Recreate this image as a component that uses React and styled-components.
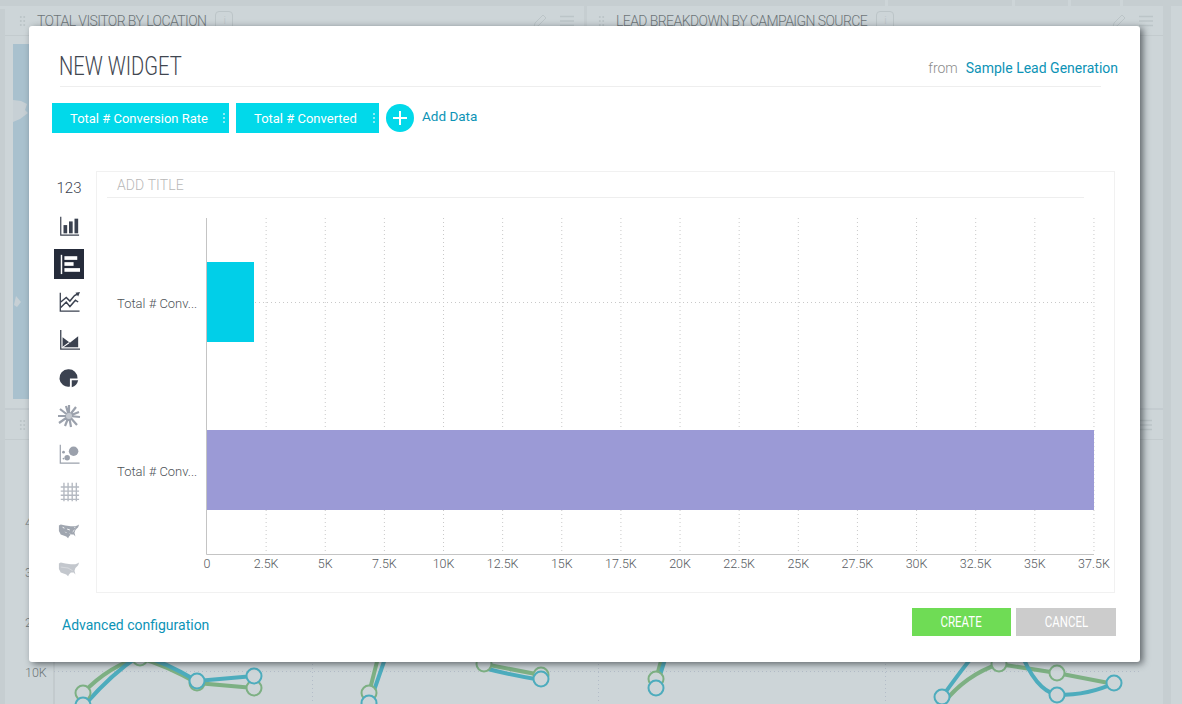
import React from "react";
import styled, { createGlobalStyle } from "styled-components";

const Global = createGlobalStyle`
  html, body { margin: 0; padding: 0; background: #cdd5d8; }
  * { box-sizing: border-box; }
`;

const Page = styled.div`
  position: relative;
  width: 1182px;
  height: 704px;
  overflow: hidden;
  background: #cdd5d8;
  font-family: Roboto, "Liberation Sans", sans-serif;
`;

/* ---------- dimmed dashboard behind the dialog ---------- */
const TopStrip = styled.div`
  height: 6px;
  display: flex;
  justify-content: flex-end;
  background: #c6ced1;
`;
const StripGap = styled.span`
  width: ${p => p.$w}px;
  border-left: 3px solid #cdd5d8;
`;
const Shell = styled.div`
  display: flex;
  height: 698px;
`;
const Gutter = styled.div`
  width: 5px;
  margin-top: 3px;
  background: #c6ced1;
`;
const Main = styled.div`
  width: 1158px;
`;
const Rail = styled.div`
  width: 8px;
  background: #c6ced1;
`;
const Dash = styled.div`
  display: grid;
  grid-template-columns: 579px 579px;
  height: 402px;
`;
const DashPanel = styled.div`
  border-left: ${p => (p.$rule ? "3px solid #c6ced1" : "none")};
  background: #cdd5d8;
`;
const DashHead = styled.div`
  height: 30px;
  display: flex;
  align-items: center;
  gap: 9px;
  border-bottom: 1px solid #c3cbce;
  color: #6e7578;
  font-size: 14px;
  font-weight: 300;
  letter-spacing: -0.58px;
  padding-right: 10px;
`;
const Grip = styled.span`
  width: 7px;
  height: 12px;
  margin: 0 2px 0 ${p => p.$left}px;
  background: radial-gradient(circle, #bcc5c8 1px, transparent 1.3px) 0 0 / 3.5px 4px;
`;
const Info = styled.span`
  width: 18px;
  height: 19px;
  border: 1px solid #bcc5c8;
  border-radius: 4px;
  color: #b9c2c5;
  font-size: 11px;
  text-align: center;
  line-height: 17px;
`;
const HeadTools = styled.span`
  margin-left: auto;
  display: flex;
  align-items: center;
  gap: 12px;
  color: #bcc5c8;
`;
const MapArea = styled.div`
  margin: 8px 0 0 8px;
  height: 355px;
  background: #a9c1ce;
`;
const MapArt = styled.svg`
  display: block;
  width: 40px;
  height: 355px;
`;
const LowerBand = styled.div`
  height: 32px;
  display: flex;
  align-items: center;
  background: #cdd5d8;
  border-top: 2px solid #c4ccd0;
  border-bottom: 1px solid #c3cbce;
  padding-right: 11px;
`;
const LowerChart = styled.svg`
  display: block;
  width: 1158px;
  height: 264px;
`;

/* ---------- dialog ---------- */
const Modal = styled.div`
  position: absolute;
  left: 29px;
  top: 26px;
  width: 1111px;
  height: 636px;
  background: #fff;
  border-radius: 3px;
  box-shadow: 3px 2px 7px rgba(35, 42, 46, 0.65);
`;
const Header = styled.div`
  margin: 0 22px 0 30px;
  height: 60px;
  display: flex;
  align-items: flex-end;
  justify-content: space-between;
  padding-bottom: 5px;
`;
const HeaderRule = styled.div`
  margin: 0 39px 0 31px;
  height: 1px;
  background: #eeeeee;
`;
const Title = styled.h1`
  margin: 0;
  font-size: 25px;
  line-height: 28px;
  font-weight: 300;
  color: #3f4650;
  transform: scaleX(0.805);
  transform-origin: left center;
`;
const Source = styled.div`
  display: flex;
  align-items: baseline;
  gap: 8px;
  font-size: 14px;
  font-weight: 300;
  line-height: 18px;
  padding-bottom: 4px;
`;
const From = styled.span`
  color: #8c8c8c;
`;
const TealLink = styled.a`
  color: #0c93b6;
  font-weight: 400;
  font-size: ${p => p.$size || 14}px;
`;
const AdvancedLink = styled(TealLink)`
  margin-top: 6px;
`;
const ChipRow = styled.div`
  display: flex;
  align-items: center;
  gap: 7px;
  margin: 16px 0 0 23px;
  height: 30px;
`;
const Chip = styled.div`
  height: 30px;
  width: ${p => p.$w}px;
  display: flex;
  align-items: center;
  justify-content: space-between;
  padding: 0 3px 0 18px;
  background: #01d9ea;
  color: #fff;
  font-size: 13px;
  font-weight: 400;
`;
const Dots = styled.span`
  width: 4px;
  height: 12px;
  background: radial-gradient(circle, rgba(255, 255, 255, 0.55) 0.7px, transparent 1px) 0 0 / 4px 4px;
`;
const AddRound = styled.div`
  width: 28px;
  height: 28px;
  border-radius: 50%;
  background: #01d9ea;
  display: flex;
  align-items: center;
  justify-content: center;
`;
const AddLabel = styled(TealLink)`
  margin: -4px 0 0 1px;
`;
const Body = styled.div`
  display: flex;
  margin-top: 38px;
`;
const IconRail = styled.div`
  width: 67px;
  padding: 2px 0 0 13px;
  display: flex;
  flex-direction: column;
  align-items: center;
  gap: 8px;
`;
const IconSlot = styled.div`
  width: 30px;
  height: 30px;
  display: flex;
  align-items: center;
  justify-content: center;
  color: ${p => (p.$active ? "#fff" : p.$muted ? "#9ba1ac" : "#3b4250")};
  background: ${p => (p.$active ? "#252b3a" : "transparent")};
  font-size: 15px;
  font-weight: 300;
`;
const ChartPanel = styled.div`
  width: 1019px;
  height: 422px;
  border: 1px solid #f1f1f1;
  padding: 0 0 0 10px;
`;
const AddTitle = styled.div`
  width: 977px;
  height: 26px;
  padding: 4px 0 0 10px;
  border-bottom: 1px solid #eeeeee;
  color: #b8b8b8;
  font-size: 14px;
  font-weight: 300;
  line-height: 18px;
  letter-spacing: 0.1px;
`;
const ChartSvg = styled.svg`
  display: block;
  margin-left: -10px;
  width: 1017px;
  height: 395px;
`;
const Footer = styled.div`
  display: flex;
  align-items: center;
  justify-content: space-between;
  margin: 15px 24px 0 33px;
  height: 28px;
`;
const Buttons = styled.div`
  display: flex;
  gap: 5px;
`;
const Btn = styled.button`
  width: ${p => p.$w}px;
  height: 28px;
  border: 0;
  padding: 0;
  background: ${p => p.$bg};
  color: #fff;
  font-family: inherit;
  font-size: 14px;
  font-weight: 400;
`;
const BtnText = styled.span`
  display: inline-block;
  transform: scaleX(0.82);
`;

const Tick = styled.text`
  font-family: Roboto, "Liberation Sans", sans-serif;
  font-size: 12.5px;
  font-weight: 300;
  fill: #555a60;
`;
const Category = styled(Tick)`
  font-size: 13px;
  fill: #4e5358;
`;

/* ---------- icons ---------- */
const Ico = ({ children, w = 22, h = 22 }) => (
  <svg width={w} height={h} viewBox="0 0 24 24" fill="currentColor">{children}</svg>
);
const Axis = () => <path d="M3 2v20h20" fill="none" stroke="currentColor" strokeWidth="1.3" />;
const IcoBars = () => (
  <Ico><Axis /><rect x="6" y="11" width="4" height="9" /><rect x="12" y="7" width="4" height="13" /><rect x="18" y="4" width="4" height="16" /></Ico>
);
const IcoHBars = () => (
  <Ico>
    <rect x="3" y="2" width="1.6" height="21" />
    <rect x="7" y="3.5" width="14" height="4" /><rect x="7" y="10" width="10" height="4" /><rect x="7" y="16.5" width="17" height="4" />
  </Ico>
);
const IcoLines = () => (
  <Ico>
    <path d="M2.5 2v20h21" fill="none" stroke="currentColor" strokeWidth="1.4" />
    <path d="M3 12l6-5 4 4 5-6 4-2M3 18l6-6 4 5 6-7 3 2" fill="none" stroke="currentColor" strokeWidth="1.6" />
    <path d="M24 1l-5 1 3 4z" />
  </Ico>
);
const IcoArea = () => (
  <Ico>
    <path d="M3 1v21h21" fill="none" stroke="currentColor" strokeWidth="1.4" />
    <path d="M5 9l8 6 9-7v12H5z" /><path d="M5 20l7-5" stroke="#fff" strokeWidth="1.1" />
  </Ico>
);
const IcoPie = () => (
  <Ico>
    <path d="M11 2.5a9.5 9.5 0 1 0 2 18.8V12.5h8.3A9.5 9.5 0 0 0 11 2.5z" />
    <path d="M15 14.5h7a10 10 0 0 1-7 7.5z" />
  </Ico>
);
const IcoBurst = () => (
  <Ico w={24} h={24}>
    <g stroke="currentColor" strokeWidth="2.2">
      <path d="M12 12V1M12 12l-3-10M12 12l7-9M12 12l10-4M12 12l11 1M12 12l8 9M12 12l2 11M12 12l-4 10M12 12l-10 7M12 12H1M12 12L3 5" />
    </g>
    <circle cx="12" cy="12" r="3" fill="#c4c8cf" />
  </Ico>
);
const IcoBubble = () => (
  <Ico>
    <path d="M2.5 2v20h21" fill="none" stroke="currentColor" strokeWidth="1.3" />
    <circle cx="17" cy="9" r="5.2" /><circle cx="10" cy="16" r="3" /><circle cx="6" cy="10" r="1.5" /><circle cx="6" cy="17" r="1" />
  </Ico>
);
const IcoGrid = () => (
  <Ico>
    <path d="M6.500 2v20M11 2v20M15.500 2v20M20 2v20M3 6.500h20M3 11h20M3 15.500h20M3 20h20" stroke="currentColor" strokeWidth="1.500" fill="none" opacity=".75" />
  </Ico>
);
const USA = "M1 7l2-1 5 1 6 1 5 0 2-1 2-1-1 3-3 3-1 3 1 4-2-2-3 0-2 2-1 2-2-2-3-1-3-1-2-4z";
const IcoMap = ({ speck }) => (
  <Ico>
    <path d={USA} opacity={speck ? 0.95 : 0.6} />
    {speck
      ? <path d="M5 9l2 1M10 11l3 1M16 14l2-2M8 14l1 1M13 16l1 1M18 9l1 1" stroke="#fff" strokeWidth="1" />
      : <path d="M3 11l8 1 5 3" stroke="#fff" strokeWidth=".6" fill="none" opacity=".6" />}
  </Ico>
);
const Pencil = () => (
  <svg width="16" height="16" viewBox="0 0 16 16" fill="none" stroke="currentColor"><path d="M2 14l1-4 8-8 3 3-8 8z" /></svg>
);
const Burger = () => (
  <svg width="14" height="12" viewBox="0 0 14 12" fill="none" stroke="currentColor" strokeWidth="1.500"><path d="M0 1.500h14M0 6h14M0 10.500h14" /></svg>
);

const rail = [
  { text: "123" },
  { icon: <IcoBars /> },
  { icon: <IcoHBars />, active: true },
  { icon: <IcoLines /> },
  { icon: <IcoArea /> },
  { icon: <IcoPie /> },
  { icon: <IcoBurst />, muted: true },
  { icon: <IcoBubble />, muted: true },
  { icon: <IcoGrid />, muted: true },
  { icon: <IcoMap speck />, muted: true },
  { icon: <IcoMap />, muted: true },
];

const ticks = ["0", "2.5K", "5K", "7.5K", "10K", "12.5K", "15K", "17.5K", "20K", "22.5K", "25K", "27.5K", "30K", "32.5K", "35K", "37.5K"];

const X0 = 110;
const STEP = 59.13;

const BarChart = () => (
  <ChartSvg viewBox="0 0 1017 395">
    {ticks.slice(1).map((_, i) => (
      <line key={i} x1={X0 + STEP * (i + 1)} x2={X0 + STEP * (i + 1)} y1="20" y2="355" stroke="#c9c9c9" strokeDasharray="1 3" />
    ))}
    <line x1={X0} x2="997" y1="104.500" y2="104.500" stroke="#c9c9c9" strokeDasharray="1 3" />
    <rect x={X0} y="64" width="47" height="80" fill="#01cfe8" />
    <rect x={X0} y="232" width="887" height="80" fill="#9b9ad6" />
    <path d={`M${X0 - 0.5} 20V356.500H997`} fill="none" stroke="#c4c4c4" />
    <Category x="20" y="110">Total # Conv...</Category>
    <Category x="20" y="278">Total # Conv...</Category>
    {ticks.map((t, i) => (
      <Tick key={t} x={X0 + STEP * i} y="370" textAnchor="middle">{t}</Tick>
    ))}
  </ChartSvg>
);

const Node = ({ x, y, c }) => <circle cx={x} cy={y} r="7.500" fill="#cdd5d8" stroke={c} strokeWidth="2" />;
const G = "#7db083";
const T = "#4dacbd";

const DashLower = () => (
  <LowerChart viewBox="5 440 1158 264">
    <path d="M54 640V704" stroke="#b9c0c3" fill="none" />
    <path d="M54 671.500H1140" stroke="#b3bcc8" strokeDasharray="1 3" fill="none" />
    {[312.500, 598.500, 885.500].map(x => (
      <path key={x} d={`M${x} 640V704`} stroke="#b3bcc8" strokeDasharray="1 3" fill="none" />
    ))}
    <g fill="none" strokeWidth="4">
      <path d="M83 693Q110 665 140 658Q165 665 197 683L254 688" stroke={G} />
      <path d="M83 707Q110 675 140 655Q165 662 197 681L254 676" stroke={T} />
      <path d="M369 693L380 650M484 664L541 675" stroke={G} />
      <path d="M369 705L388 650M484 668Q510 675 541 680" stroke={T} />
      <path d="M656 679L664 650" stroke={G} />
      <path d="M656 688L668 650" stroke={T} />
      <path d="M942 705Q965 675 999 664L1057 673L1114 684" stroke={G} />
      <path d="M942 697Q965 665 978 650M1020 650Q1035 690 1057 695Q1090 695 1114 683" stroke={T} />
    </g>
    {[[83, 693, G], [197, 683, G], [254, 688, G], [140, 658, G], [83, 705, T], [197, 681, T], [254, 676, T],
      [369, 693, G], [369, 703, T], [484, 664, G], [541, 675, G], [541, 679, T],
      [656, 679, G], [656, 688, T], [999, 664, G], [1057, 673, G], [1057, 695, T], [942, 697, T], [1114, 683, T]]
      .map(([x, y, c], i) => <Node key={i} x={x} y={y} c={c} />)}
    <g fill="#6e7578" fontSize="12.500" fontWeight="300" fontFamily="Roboto, sans-serif">
      <text x="25" y="527">4</text>
      <text x="25" y="577">3</text>
      <text x="25" y="627">2</text>
      <text x="25" y="677">10K</text>
    </g>
  </LowerChart>
);

export default function App() {
  return (
    <Page>
      <Global />
      <TopStrip>
        <StripGap $w={127} /><StripGap $w={56} /><StripGap $w={52} /><StripGap $w={62} />
      </TopStrip>
      <Shell>
        <Gutter />
        <Main>
          <Dash>
            <DashPanel>
              <DashHead>
                <Grip $left={14} />
                TOTAL VISITOR BY LOCATION <Info>i</Info>
                <HeadTools><Pencil /><Burger /></HeadTools>
              </DashHead>
              <MapArea>
                <MapArt viewBox="0 0 40 355" fill="#c7d0d5">
                  <path d="M0 56l8 1 6 3-2 6 3 3-8 6-7 3z" />
                  <path d="M3 252l5 6-4 5-3-2z" />
                </MapArt>
              </MapArea>
            </DashPanel>
            <DashPanel $rule>
              <DashHead>
                <Grip $left={11} />
                LEAD BREAKDOWN BY CAMPAIGN SOURCE <Info>i</Info>
                <HeadTools><Pencil /><Burger /></HeadTools>
              </DashHead>
            </DashPanel>
          </Dash>
          <LowerBand>
            <Grip $left={14} />
            <HeadTools><Burger /></HeadTools>
          </LowerBand>
          <DashLower />
        </Main>
        <Rail />
      </Shell>

      <Modal>
        <Header>
          <Title>NEW WIDGET</Title>
          <Source>
            <From>from</From>
            <TealLink>Sample Lead Generation</TealLink>
          </Source>
        </Header>
        <HeaderRule />
        <ChipRow>
          <Chip $w={177}>Total # Conversion Rate<Dots /></Chip>
          <Chip $w={143}>Total # Converted<Dots /></Chip>
          <AddRound>
            <svg width="16" height="16" viewBox="0 0 16 16"><path d="M8 1v14M1 8h14" stroke="#fff" strokeWidth="2" /></svg>
          </AddRound>
          <AddLabel $size={13.5}>Add Data</AddLabel>
        </ChipRow>
        <Body>
          <IconRail>
            {rail.map((r, i) => (
              <IconSlot key={i} $active={r.active} $muted={r.muted}>{r.text || r.icon}</IconSlot>
            ))}
          </IconRail>
          <ChartPanel>
            <AddTitle>ADD TITLE</AddTitle>
            <BarChart />
          </ChartPanel>
        </Body>
        <Footer>
          <AdvancedLink>Advanced configuration</AdvancedLink>
          <Buttons>
            <Btn $w={99} $bg="#6fdc55"><BtnText>CREATE</BtnText></Btn>
            <Btn $w={100} $bg="#cccccc"><BtnText>CANCEL</BtnText></Btn>
          </Buttons>
        </Footer>
      </Modal>
    </Page>
  );
}
